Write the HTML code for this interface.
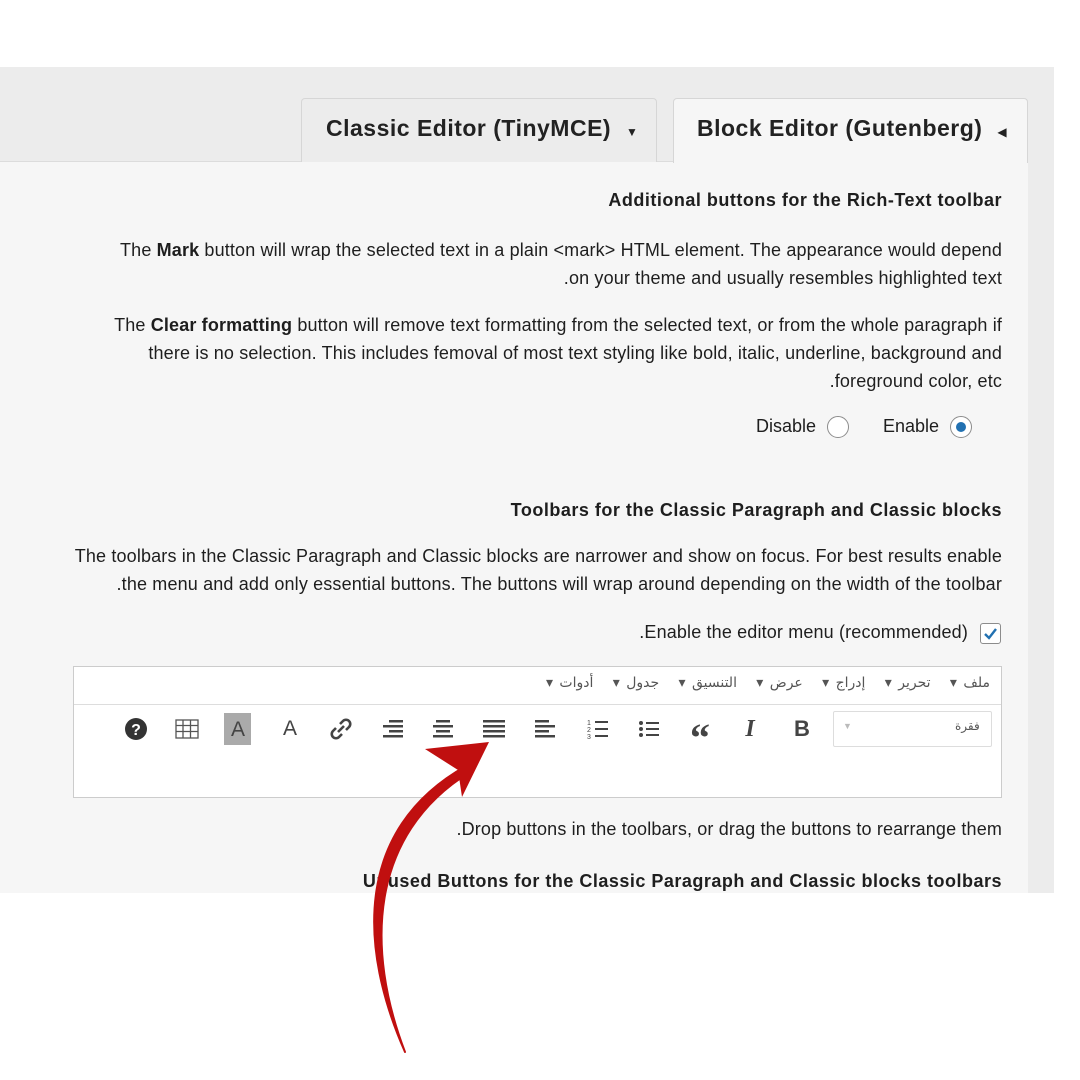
<!DOCTYPE html>
<html><head><meta charset="utf-8"><style>
*{margin:0;padding:0;box-sizing:border-box}
body{width:1080px;height:1080px;background:#fff;position:relative;overflow:hidden;font-family:"Liberation Sans","DejaVu Sans",sans-serif;color:#1e1e1e}
.abs{position:absolute}
.r{position:absolute;right:78px;white-space:nowrap;text-align:right;font-size:18px;letter-spacing:0.15px}
.b{font-weight:bold;letter-spacing:0.5px}
.tab{position:absolute;top:98px;height:64px;border:1px solid #d6d6d6;border-bottom:none;border-radius:4px 4px 0 0;font-size:23px;letter-spacing:0.5px;font-weight:bold;color:#222;padding-top:16px;white-space:nowrap}
.ic{position:absolute;top:716px;width:26px;height:26px;display:flex;align-items:center;justify-content:center;color:#444}
</style></head><body>
<div class="abs" style="left:0;top:67px;width:1054px;height:826px;background:#ececec"></div>
<div class="abs" style="left:0;top:161px;width:1028px;height:732px;background:#f6f6f6;border-top:1px solid #dcdcdc"></div>
<div class="tab" style="left:301px;width:356px;background:#ececec;padding-left:24px">Classic Editor (TinyMCE) <span style="font-size:12px;margin-left:8px">▼</span></div>
<div class="tab" style="left:673px;width:355px;height:65px;background:#f6f6f6;padding-left:23px">Block Editor (Gutenberg) <span style="font-size:12px;margin-left:8px">◀</span></div>

<div class="r b" style="top:190px">Additional buttons for the Rich-Text toolbar</div>
<div class="r" style="top:240px">The <b>Mark</b> button will wrap the selected text in a plain &lt;mark&gt; HTML element. The appearance would depend</div>
<div class="r" style="top:268px">.on your theme and usually resembles highlighted text</div>
<div class="r" style="top:315px">The <b>Clear formatting</b> button will remove text formatting from the selected text, or from the whole paragraph if</div>
<div class="r" style="top:343px">there is no selection. This includes femoval of most text styling like bold, italic, underline, background and</div>
<div class="r" style="top:371px">.foreground color, etc</div>
<div class="abs" style="left:756px;top:416px;font-size:18px">Disable</div>
<div class="abs" style="left:827px;top:416px;width:22px;height:22px;border:1px solid #8c8c8c;border-radius:50%;background:#fff"></div>
<div class="abs" style="left:883px;top:416px;font-size:18px">Enable</div>
<div class="abs" style="left:950px;top:416px;width:22px;height:22px;border:1px solid #8c8c8c;border-radius:50%;background:#fff"><div style="margin:5px;width:10px;height:10px;border-radius:50%;background:#2271b1"></div></div>

<div class="r b" style="top:500px">Toolbars for the Classic Paragraph and Classic blocks</div>
<div class="r" style="top:546px">The toolbars in the Classic Paragraph and Classic blocks are narrower and show on focus. For best results enable</div>
<div class="r" style="top:574px">.the menu and add only essential buttons. The buttons will wrap around depending on the width of the toolbar</div>
<div class="r" style="top:622px;right:112px">.Enable the editor menu (recommended)</div>
<div class="abs" style="left:980px;top:623px;width:21px;height:21px;border:1px solid #8c8c8c;border-radius:3px;background:#fff"><svg width="19" height="19" viewBox="0 0 19 19"><path d="M4 10l4 4 7-9" stroke="#2271b1" stroke-width="2.4" fill="none"/></svg></div>

<div class="abs" style="left:73px;top:666px;width:929px;height:132px;border:1px solid #ccc;background:#fff"></div>
<div class="abs" style="left:74px;top:704px;width:927px;height:1px;background:#ddd"></div>
<div class="abs" style="right:90px;top:675px;font-size:14px;color:#555;font-family:'DejaVu Sans',sans-serif;direction:rtl;white-space:nowrap;word-spacing:2px">ملف ▾ &nbsp; تحرير ▾ &nbsp; إدراج ▾ &nbsp; عرض ▾ &nbsp; التنسيق ▾ &nbsp; جدول ▾ &nbsp; أدوات ▾</div>
<div class="abs" style="left:833px;top:711px;width:159px;height:36px;border:1px solid #ddd;border-radius:2px;background:#fff"></div>
<div class="abs" style="left:843px;top:721px;font-size:9px;color:#bbb">▼</div>
<div class="abs" style="left:955px;top:719px;font-size:12px;color:#555;font-family:'DejaVu Sans',sans-serif">فقرة</div>

<div class="ic" style="left:789px;font-size:22px;font-weight:bold">B</div>
<div class="ic" style="left:737px;font-size:24px;font-weight:bold;font-style:italic;font-family:'Liberation Serif',serif">I</div>
<div class="ic" style="left:687px;font-size:40px;font-weight:bold;font-family:'Liberation Serif',serif;padding-top:16px">“</div>
<div class="ic" style="left:636px"><svg width="22" height="20"><g fill="#444"><circle cx="3" cy="4" r="2"/><circle cx="3" cy="10" r="2"/><circle cx="3" cy="16" r="2"/><rect x="8" y="3" width="13" height="2"/><rect x="8" y="9" width="13" height="2"/><rect x="8" y="15" width="13" height="2"/></g></svg></div>
<div class="ic" style="left:585px"><svg width="22" height="22"><g fill="#444"><rect x="8" y="3" width="13" height="2"/><rect x="8" y="10" width="13" height="2"/><rect x="8" y="17" width="13" height="2"/><text x="0" y="7" font-size="7">1</text><text x="0" y="14" font-size="7">2</text><text x="0" y="21" font-size="7">3</text></g></svg></div>
<div class="ic" style="left:532px"><svg width="22" height="20"><g fill="#444"><rect x="1" y="1" width="14" height="2.5"/><rect x="1" y="6" width="20" height="2.5"/><rect x="1" y="11" width="14" height="2.5"/><rect x="1" y="16" width="20" height="2.5"/></g></svg></div>
<div class="ic" style="left:481px"><svg width="24" height="20"><g fill="#444"><rect x="1" y="1" width="22" height="2.5"/><rect x="1" y="6" width="22" height="2.5"/><rect x="1" y="11" width="22" height="2.5"/><rect x="1" y="16" width="22" height="2.5"/></g></svg></div>
<div class="ic" style="left:430px"><svg width="22" height="20"><g fill="#444"><rect x="4" y="1" width="14" height="2.5"/><rect x="1" y="6" width="20" height="2.5"/><rect x="4" y="11" width="14" height="2.5"/><rect x="1" y="16" width="20" height="2.5"/></g></svg></div>
<div class="ic" style="left:380px"><svg width="22" height="20"><g fill="#444"><rect x="7" y="1" width="14" height="2.5"/><rect x="1" y="6" width="20" height="2.5"/><rect x="7" y="11" width="14" height="2.5"/><rect x="1" y="16" width="20" height="2.5"/></g></svg></div>
<div class="ic" style="left:328px"><svg width="24" height="24" viewBox="0 0 24 24"><g stroke="#444" stroke-width="2.6" fill="none"><path d="M11 7l3-3a4 4 0 016 6l-3 3"/><path d="M13 17l-3 3a4 4 0 01-6-6l3-3"/><path d="M9 15l6-6"/></g></svg></div>
<div class="ic" style="left:277px;font-size:21px">A</div>
<div class="abs" style="left:224px;top:713px;width:27px;height:32px;background:#aaa"></div>
<div class="ic" style="left:225px;font-size:21px;top:717px">A</div>
<div class="ic" style="left:174px"><svg width="24" height="20"><g stroke="#555" stroke-width="1.3" fill="none"><rect x="1" y="1" width="22" height="18"/><path d="M1 6.5h22M1 12.5h22M8 1v18M15.5 1v18"/></g></svg></div>
<div class="ic" style="left:123px"><svg width="24" height="24"><circle cx="12" cy="12" r="11" fill="#333"/><text x="12" y="18" font-size="16" font-weight="bold" fill="#fff" text-anchor="middle" font-family="Liberation Sans">?</text></svg></div>

<div class="r" style="top:819px">.Drop buttons in the toolbars, or drag the buttons to rearrange them</div>
<div class="r b" style="top:871px">Unused Buttons for the Classic Paragraph and Classic blocks toolbars</div>

<svg class="abs" style="left:0;top:0" width="1080" height="1080">
<path d="M405 1052 C360 950 352 830 466 766 L470 772 C368 835 366 950 405 1052 Z" fill="#c00f0f" stroke="#c00f0f" stroke-width="2" stroke-linejoin="round"/>
<path d="M425 749 L489 742 L462 797 L458 770 Z" fill="#c00f0f"/>
</svg>
</body></html>
